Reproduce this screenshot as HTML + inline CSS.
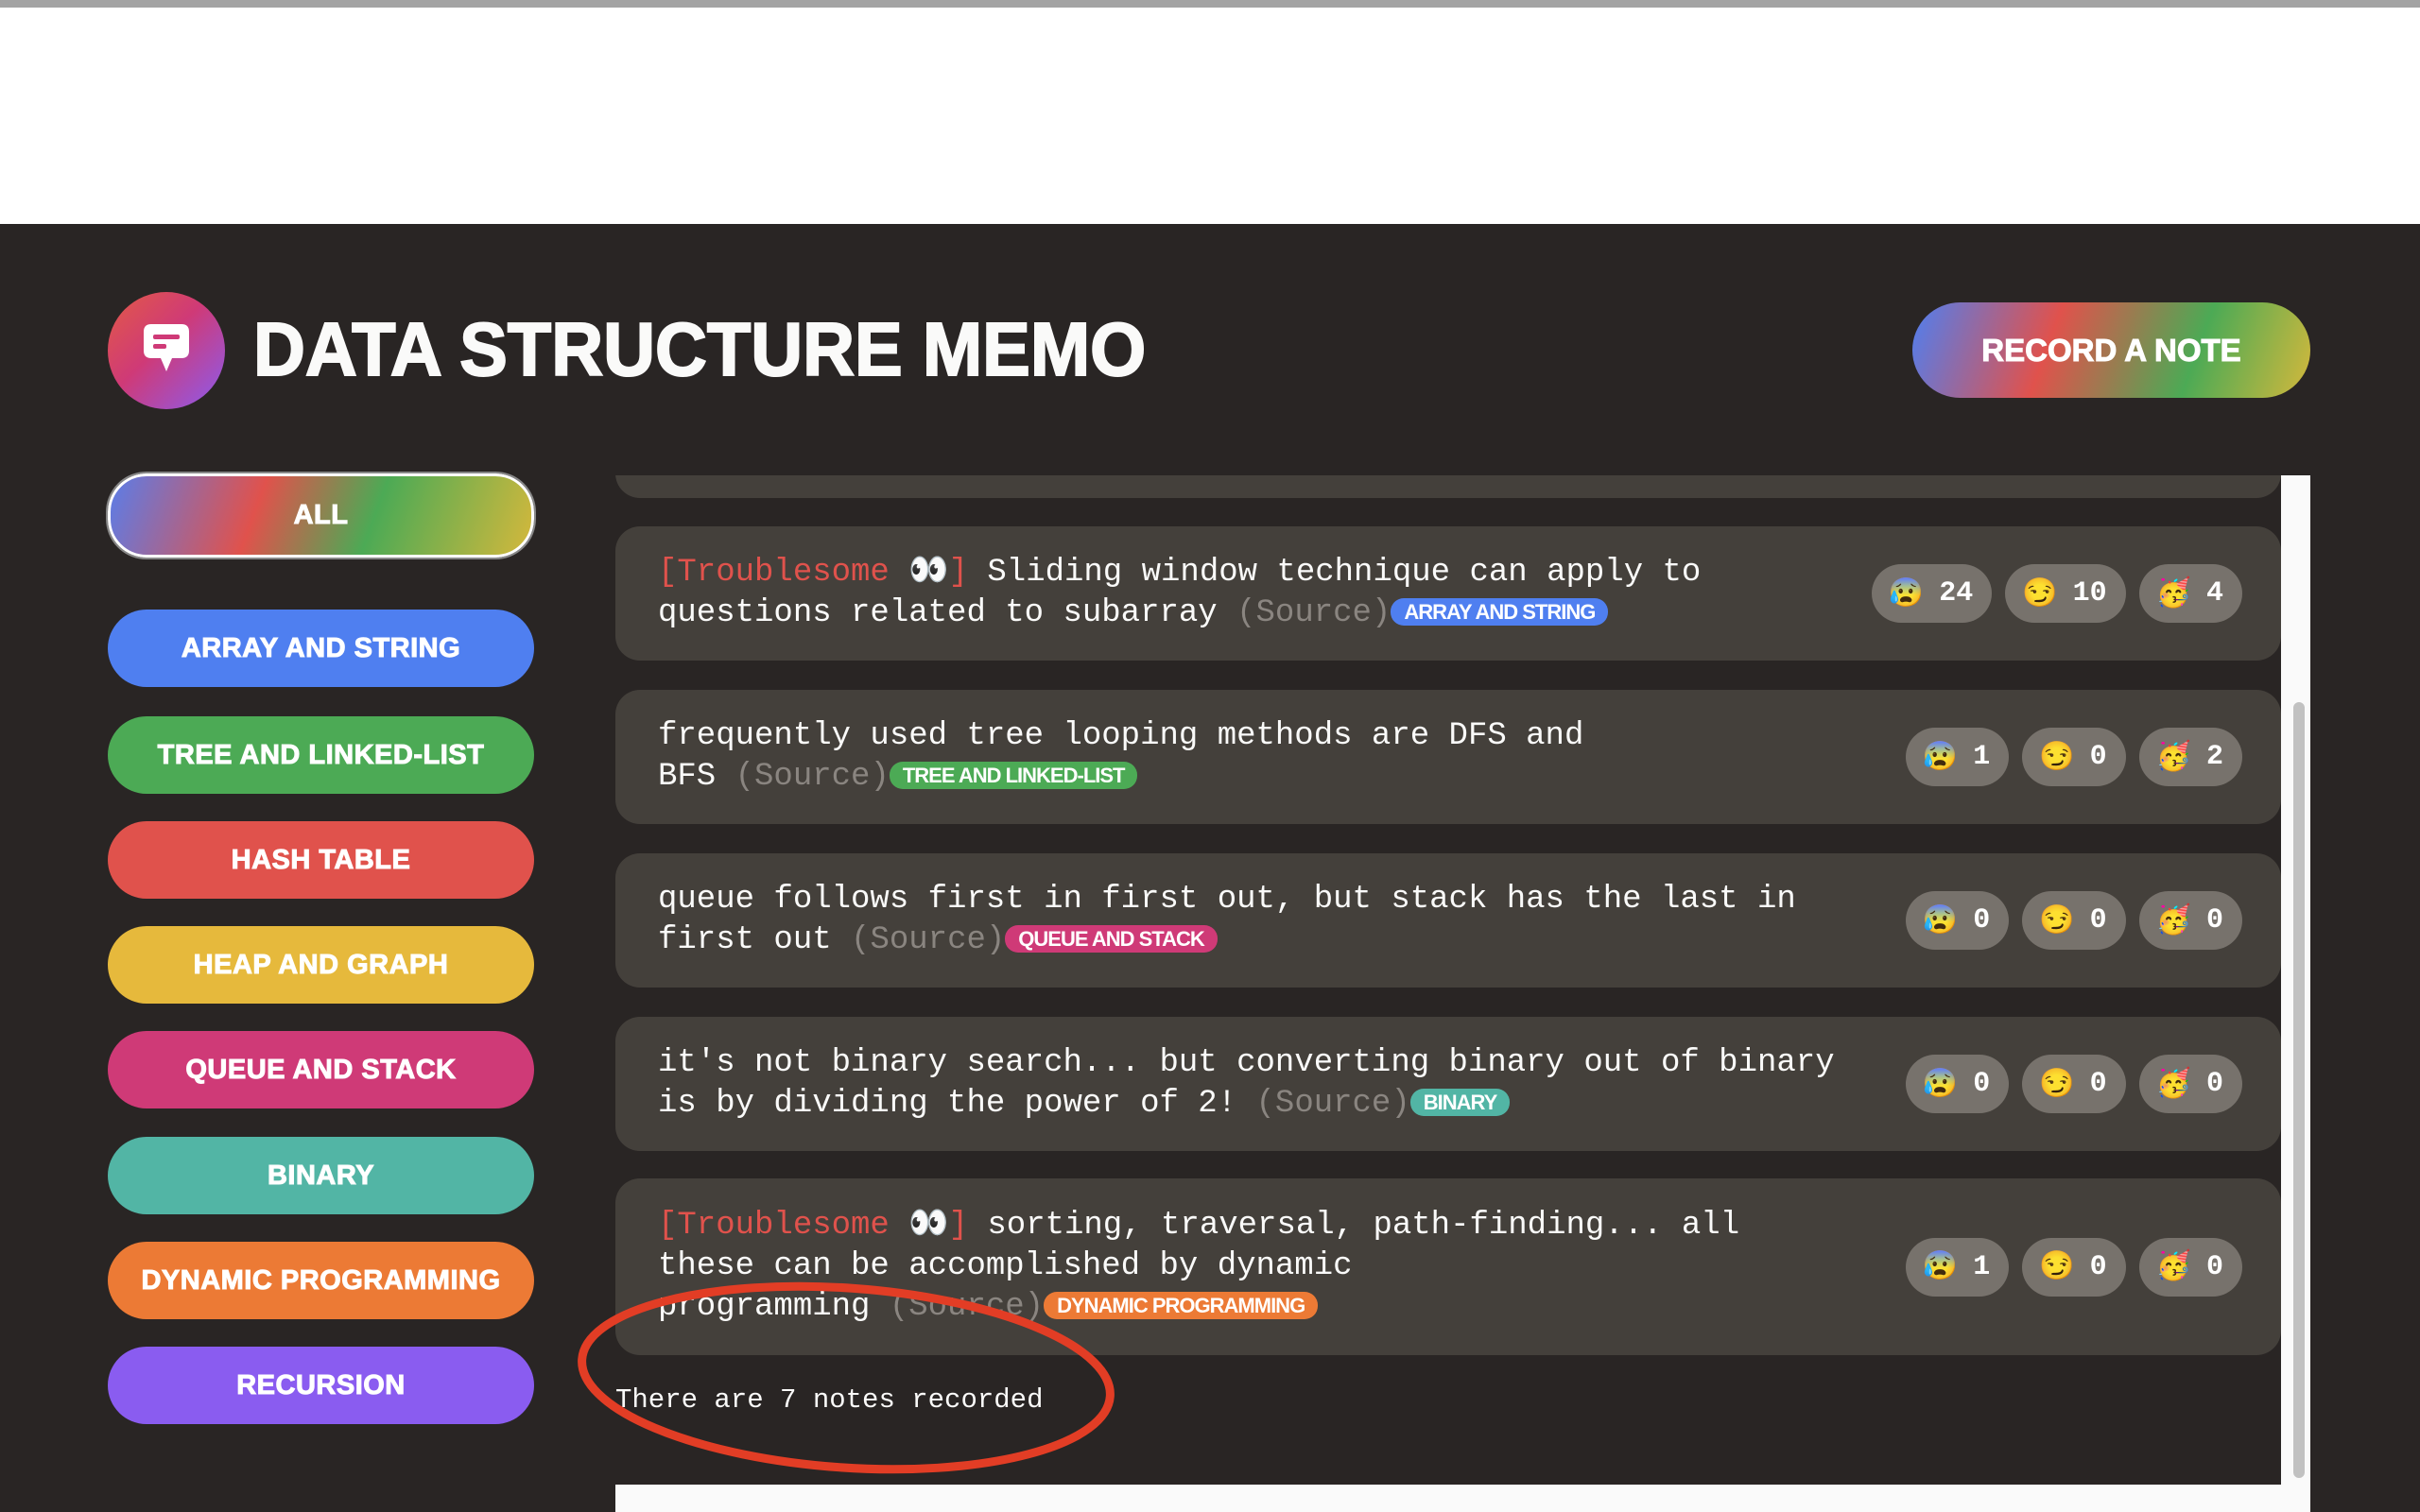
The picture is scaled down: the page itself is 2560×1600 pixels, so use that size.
<!DOCTYPE html>
<html><head><meta charset="utf-8"><style>
*{margin:0;padding:0;box-sizing:border-box}
body{width:2560px;height:1600px;overflow:hidden;background:#fff;position:relative;font-family:"Liberation Sans",sans-serif}
.topbar{position:absolute;left:0;top:0;width:2560px;height:8px;background:#a3a3a3}
.main{position:absolute;left:0;top:237px;width:2560px;height:1363px;background:#292524}
.logo{position:absolute;left:114px;top:309px;width:124px;height:124px;border-radius:50%;background:linear-gradient(135deg,#e35a45,#cf3a77 45%,#8a5cf0)}
.title{position:absolute;left:268px;top:324px;font-weight:900;font-size:80px;color:#fafaf9;letter-spacing:0;white-space:nowrap;-webkit-text-stroke:2px #fafaf9;transform:scaleX(0.95);transform-origin:left}
.rec{position:absolute;left:2023px;top:320px;width:421px;height:101px;border-radius:51px;background:linear-gradient(110deg,#4f7ff0,#e0524c 35%,#4caa55 70%,#d4b83c);color:#fff;font-weight:900;font-size:33px;display:flex;align-items:center;justify-content:center;-webkit-text-stroke:1px #fff}
.btn{position:absolute;left:114px;width:451px;height:82px;border-radius:41px;color:#fff;font-weight:900;font-size:29px;display:flex;align-items:center;justify-content:center;letter-spacing:.5px;-webkit-text-stroke:1px #fff}
.all{top:501px;height:89px;border:3px solid #fff;outline:2px solid #888;background:linear-gradient(110deg,#5b7de8,#e0524c 35%,#4caa55 62%,#d4b83c)}
.panel{position:absolute;left:651px;top:503px;width:1762px;height:1068px;overflow:hidden}
.card{position:absolute;left:0;width:1762px;background:#44403b;border-radius:26px;display:flex;align-items:center;padding:0 45px}
.txt{font-family:"Liberation Mono",monospace;font-size:34px;line-height:43px;color:#fafaf9;flex:1}
.tr{color:#e0524c}.src{color:#8a8580}
.tag{display:inline-block;font-family:"Liberation Sans",sans-serif;font-weight:900;font-size:22px;color:#fff;border-radius:14px;padding:0 14px;line-height:29px;letter-spacing:-1px;vertical-align:2px}
.pills{display:flex;gap:14px;margin-right:-4px}
.pill{height:62px;border-radius:31px;background:#77726c;color:#fff;font-family:"Liberation Mono",monospace;font-weight:bold;font-size:30px;display:flex;align-items:center;padding:0 20px 0 18px;gap:16px}
.em{font-size:30px}
.foot{position:absolute;left:651px;top:1465px;font-family:"Liberation Mono",monospace;font-size:29px;color:#fafaf9}
.track{position:absolute;left:2413px;top:503px;width:31px;height:1097px;background:#fafafa}
.thumb{position:absolute;left:2426px;top:743px;width:12px;height:821px;border-radius:6px;background:#c1c1c1}
.bottom{position:absolute;left:651px;top:1571px;width:1793px;height:29px;background:#fafafa}
</style></head><body>
<div class="topbar"></div>
<div class="main"></div>
<div class="logo"><svg width="124" height="124" viewBox="0 0 124 124"><path d="M38 42 Q38 34 46 34 H78 Q86 34 86 42 V62 Q86 70 78 70 H68 L62 84 L56 70 H46 Q38 70 38 62 Z" fill="#fff"/><rect x="48" y="45" width="28" height="5" rx="2" fill="#cf3a77"/><rect x="48" y="55" width="14" height="5" rx="2" fill="#cf3a77"/></svg></div>
<div class="title">DATA STRUCTURE MEMO</div>
<div class="rec">RECORD A NOTE</div>
<div class="btn all">ALL</div>
<div class="btn" style="top:645px;background:#4f7ff0">ARRAY AND STRING</div>
<div class="btn" style="top:758px;background:#4caa55">TREE AND LINKED-LIST</div>
<div class="btn" style="top:869px;background:#e0524c">HASH TABLE</div>
<div class="btn" style="top:980px;background:#e6b93c">HEAP AND GRAPH</div>
<div class="btn" style="top:1091px;background:#cf3a77">QUEUE AND STACK</div>
<div class="btn" style="top:1203px;background:#52b5a5">BINARY</div>
<div class="btn" style="top:1314px;background:#ec7a35">DYNAMIC PROGRAMMING</div>
<div class="btn" style="top:1425px;background:#8a5cf0">RECURSION</div>
<div class="panel">
<div class="card" style="top:-120px;height:144px"></div>
<div class="card" style="top:54px;height:142px"><div class="txt"><span class="tr">[Troublesome 👀]</span> Sliding window technique can apply to<br>questions related to subarray <span class="src">(Source)</span><span class="tag" style="background:#4f7ff0">ARRAY AND STRING</span></div><div class="pills"><div class="pill"><span class="em">😰</span>24</div><div class="pill"><span class="em">😏</span>10</div><div class="pill"><span class="em">🥳</span>4</div></div></div>
<div class="card" style="top:227px;height:142px"><div class="txt">frequently used tree looping methods are DFS and<br>BFS <span class="src">(Source)</span><span class="tag" style="background:#4caa55">TREE AND LINKED-LIST</span></div><div class="pills"><div class="pill"><span class="em">😰</span>1</div><div class="pill"><span class="em">😏</span>0</div><div class="pill"><span class="em">🥳</span>2</div></div></div>
<div class="card" style="top:400px;height:142px"><div class="txt">queue follows first in first out, but stack has the last in<br>first out <span class="src">(Source)</span><span class="tag" style="background:#cf3a77">QUEUE AND STACK</span></div><div class="pills"><div class="pill"><span class="em">😰</span>0</div><div class="pill"><span class="em">😏</span>0</div><div class="pill"><span class="em">🥳</span>0</div></div></div>
<div class="card" style="top:573px;height:142px"><div class="txt">it's not binary search... but converting binary out of binary<br>is by dividing the power of 2! <span class="src">(Source)</span><span class="tag" style="background:#52b5a5">BINARY</span></div><div class="pills"><div class="pill"><span class="em">😰</span>0</div><div class="pill"><span class="em">😏</span>0</div><div class="pill"><span class="em">🥳</span>0</div></div></div>
<div class="card" style="top:744px;height:187px"><div class="txt"><span class="tr">[Troublesome 👀]</span> sorting, traversal, path-finding... all<br>these can be accomplished by dynamic<br>programming <span class="src">(Source)</span><span class="tag" style="background:#ec7a35">DYNAMIC PROGRAMMING</span></div><div class="pills"><div class="pill"><span class="em">😰</span>1</div><div class="pill"><span class="em">😏</span>0</div><div class="pill"><span class="em">🥳</span>0</div></div></div>
</div>
<div class="foot">There are 7 notes recorded</div>
<div class="track"></div><div class="thumb"></div>
<div class="bottom"></div>
<svg style="position:absolute;left:0;top:0" width="2560" height="1600"><ellipse cx="895" cy="1458" rx="280" ry="95" transform="rotate(4 895 1458)" fill="none" stroke="#e23d25" stroke-width="9"/></svg>
</body></html>
